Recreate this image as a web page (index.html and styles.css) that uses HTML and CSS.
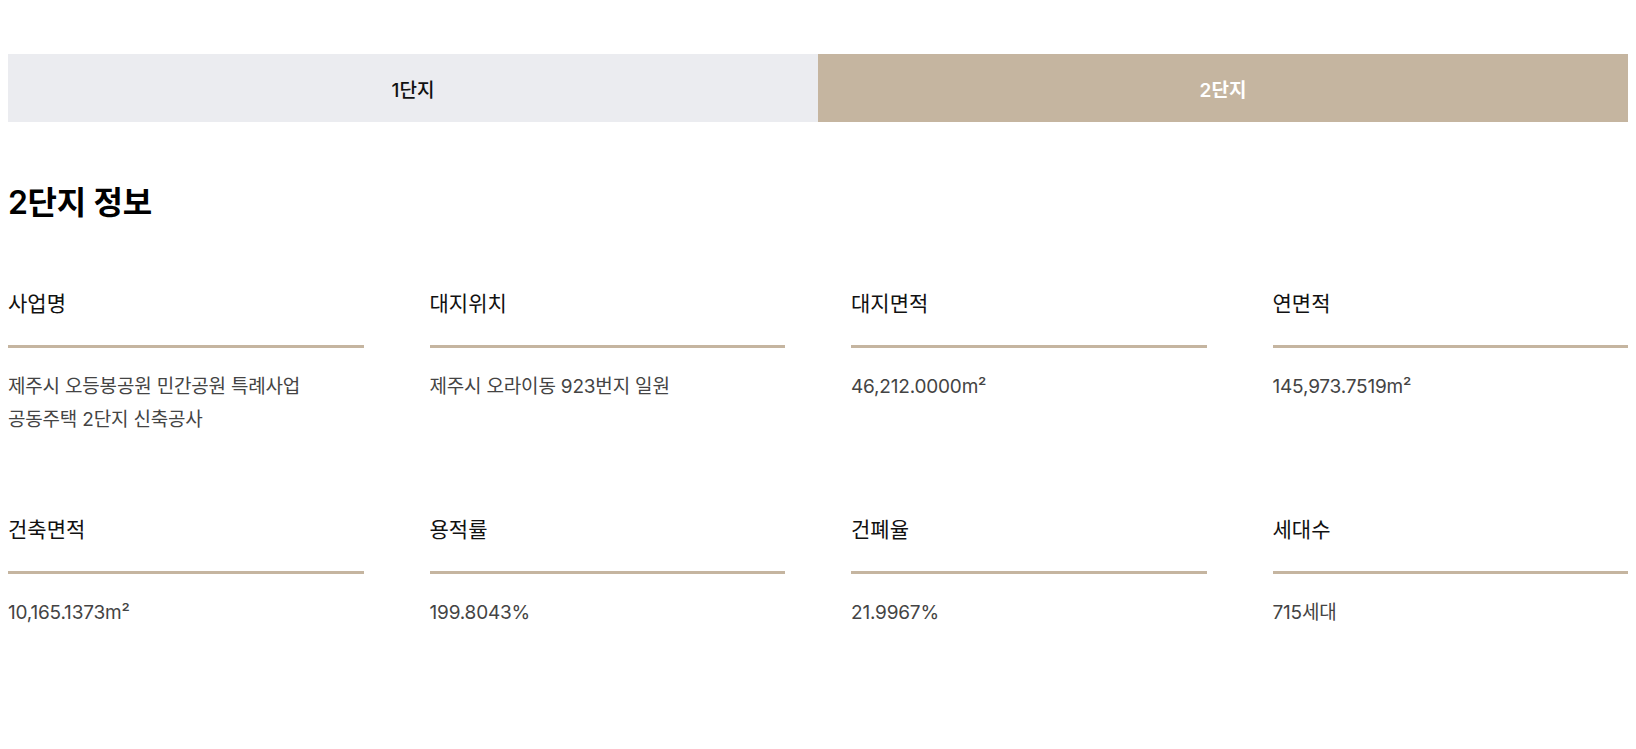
FILE: index.html
```html
<!DOCTYPE html>
<html lang="ko">
<head>
    <meta charset="UTF-8">
    <meta name="viewport" content="width=device-width, initial-scale=1.0">
    <title>2단지 정보</title>
    <link rel="stylesheet" href="styles.css">
</head>
<body>
    <div class="container">
        <div class="tabs">
            <button class="tab">1단지</button>
            <button class="tab active">2단지</button>
        </div>

        <h2 class="section-title">2단지 정보</h2>

        <div class="info-grid">
            <div class="info-item">
                <div class="info-label">사업명</div>
                <div class="info-value">제주시 오등봉공원 민간공원 특례사업<br>공동주택 2단지 신축공사</div>
            </div>
            <div class="info-item">
                <div class="info-label">대지위치</div>
                <div class="info-value">제주시 오라이동 923번지 일원</div>
            </div>
            <div class="info-item">
                <div class="info-label">대지면적</div>
                <div class="info-value">46,212.0000m²</div>
            </div>
            <div class="info-item">
                <div class="info-label">연면적</div>
                <div class="info-value">145,973.7519m²</div>
            </div>
            <div class="info-item">
                <div class="info-label">건축면적</div>
                <div class="info-value">10,165.1373m²</div>
            </div>
            <div class="info-item">
                <div class="info-label">용적률</div>
                <div class="info-value">199.8043%</div>
            </div>
            <div class="info-item">
                <div class="info-label">건폐율</div>
                <div class="info-value">21.9967%</div>
            </div>
            <div class="info-item">
                <div class="info-label">세대수</div>
                <div class="info-value">715세대</div>
            </div>
        </div>
    </div>
</body>
</html>
```

FILE: styles.css
```css
body {
    margin: 0;
    font-family: Inter, 'Noto Sans CJK KR', sans-serif;
    background-color: #fff;
    color: #111;
}

.container {
    padding: 54px 8px 80px;
}

.tabs {
    display: flex;
}

.tab {
    flex: 1;
    height: 68px;
    border: none;
    background-color: #ebecf0;
    color: #111;
    font-family: inherit;
    font-size: 19px;
    font-weight: 500;
    cursor: pointer;
}

.tab.active {
    background-color: #c5b5a0;
    color: #fff;
    font-weight: 600;
}

.section-title {
    margin: 61px 0 0;
    font-size: 32px;
    line-height: 40px;
    font-weight: 600;
    letter-spacing: -0.01em;
    color: #000;
}

.info-grid {
    display: grid;
    grid-template-columns: repeat(4, 1fr);
    column-gap: 66px;
    row-gap: 78px;
    margin-top: 65px;
}

.info-label {
    font-size: 21px;
    line-height: 32px;
    font-weight: 400;
    color: #111;
    padding-bottom: 25px;
    border-bottom: 3px solid #c5b5a0;
}

.info-value {
    margin-top: 22px;
    font-size: 19px;
    line-height: 33px;
    letter-spacing: -0.01em;
    color: #444;
}
```
